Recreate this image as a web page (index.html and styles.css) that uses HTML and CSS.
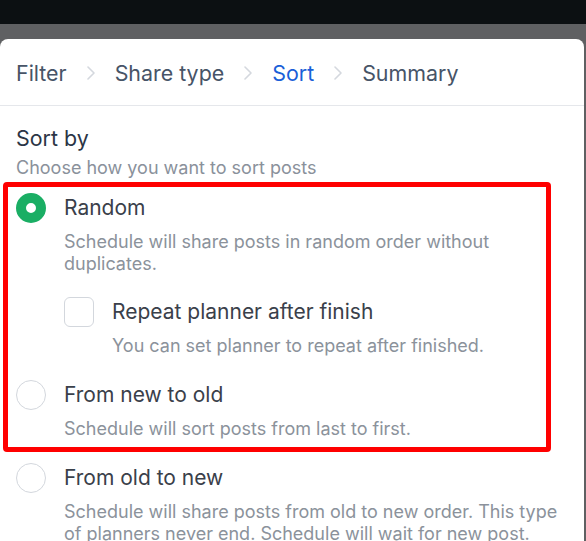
FILE: index.html
```html
<!DOCTYPE html>
<html lang="en">
<head>
<meta charset="utf-8">
<title>Sort</title>
<link rel="stylesheet" href="styles.css">
</head>
<body>
<div class="topbar"></div>
<div class="backdrop">
  <div class="panel">
    <nav class="crumbs">
      <span class="crumb">Filter</span>
      <svg class="chev" viewBox="0 0 8 14" width="8" height="14"><path d="M1 1l6 6-6 6" fill="none" stroke="#d4d8de" stroke-width="1.6" stroke-linecap="round" stroke-linejoin="round"/></svg>
      <span class="crumb">Share type</span>
      <svg class="chev" viewBox="0 0 8 14" width="8" height="14"><path d="M1 1l6 6-6 6" fill="none" stroke="#d4d8de" stroke-width="1.6" stroke-linecap="round" stroke-linejoin="round"/></svg>
      <span class="crumb active">Sort</span>
      <svg class="chev" viewBox="0 0 8 14" width="8" height="14"><path d="M1 1l6 6-6 6" fill="none" stroke="#d4d8de" stroke-width="1.6" stroke-linecap="round" stroke-linejoin="round"/></svg>
      <span class="crumb">Summary</span>
    </nav>
    <section class="content">
      <h2 class="heading">Sort by</h2>
      <p class="sub">Choose how you want to sort posts</p>
      <div class="options">
        <div class="option">
          <span class="radio checked"></span>
          <div class="body">
            <div class="title">Random</div>
            <p class="desc">Schedule will share posts in random order without duplicates.</p>
            <div class="option nested">
              <span class="checkbox"></span>
              <div class="body">
                <div class="title">Repeat planner after finish</div>
                <p class="desc">You can set planner to repeat after finished.</p>
              </div>
            </div>
          </div>
        </div>
        <div class="option">
          <span class="radio"></span>
          <div class="body">
            <div class="title">From new to old</div>
            <p class="desc">Schedule will sort posts from last to first.</p>
          </div>
        </div>
        <div class="option">
          <span class="radio"></span>
          <div class="body">
            <div class="title">From old to new</div>
            <p class="desc">Schedule will share posts from old to new order. This type of planners never end. Schedule will wait for new post.</p>
          </div>
        </div>
      </div>
      <div class="highlight"></div>
    </section>
  </div>
</div>
</body>
</html>
```
FILE: styles.css
```css
* { box-sizing: border-box; }
html, body { margin: 0; padding: 0; }
body {
  font-family: Inter, "Noto Sans", sans-serif;
  background: #5f6062;
  width: 586px;
  height: 541px;
  overflow: hidden;
}
.topbar {
  height: 24px;
  background: #0c1012;
}
.backdrop {
  padding-top: 15px;
  padding-right: 2px;
}
.panel {
  background: #fff;
  border-radius: 8px 8px 0 0;
  height: 520px;
}
.crumbs {
  display: flex;
  align-items: center;
  gap: 20px;
  padding: 20px 16px 18px;
  border-bottom: 1px solid #e5e7eb;
}
.crumb {
  font-size: 21.4px;
  line-height: 28px;
  color: #475467;
}
.crumb.active { color: #1a5fd8; }
.chev { display: block; }
.content {
  position: relative;
  padding: 18px 16px 0;
}
.heading {
  margin: 0;
  font-size: 21.4px;
  line-height: 28px;
  font-weight: 400;
  color: #2b3546;
}
.sub {
  margin: 5px 0 0;
  font-size: 18px;
  line-height: 22px;
  color: #8a919b;
}
.options {
  margin-top: 14px;
  display: flex;
  flex-direction: column;
  gap: 23px;
}
.option {
  display: flex;
  gap: 18px;
  align-items: flex-start;
}
.option.nested { margin-top: 22px; }
.body { max-width: 500px; }
.radio, .checkbox {
  flex: none;
  width: 30px;
  height: 30px;
  border: 1px solid #d3d7dd;
  background: #fff;
}
.radio { border-radius: 50%; }
.radio.checked {
  border: 10px solid #1aae64;
}
.checkbox { border-radius: 6px; }
.title {
  font-size: 21px;
  line-height: 30px;
  color: #3a404a;
}
.desc {
  margin: 8px 0 0;
  font-size: 18px;
  line-height: 22px;
  color: #8b929b;
}
.highlight {
  position: absolute;
  left: 3px;
  top: 76px;
  width: 548px;
  height: 270px;
  border: 5px solid #ff0000;
  border-radius: 4px;
  pointer-events: none;
}
```
